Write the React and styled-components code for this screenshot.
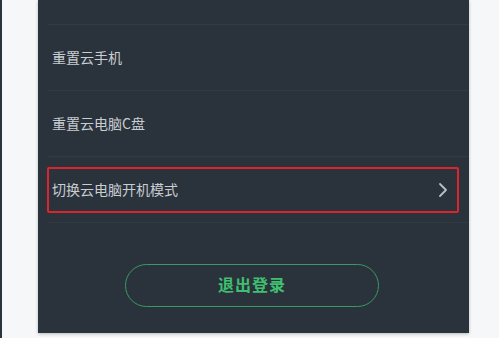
import styled, { createGlobalStyle } from "styled-components";

const GlobalStyle = createGlobalStyle`
  html, body {
    margin: 0;
    padding: 0;
    background: #f6f7f9;
    font-family: "Noto Sans CJK SC", "Noto Sans", sans-serif;
  }
`;

const Page = styled.div`
  width: 499px;
  height: 338px;
  display: flex;
  overflow: hidden;
  background: #f6f7f9;
  border-left: 2px solid #2b333d;
  box-sizing: border-box;
  padding-left: 36px;
`;

const Panel = styled.div`
  width: 431px;
  height: 333px;
  background: #2a323c;
  box-shadow: 0 1px 3px rgba(0, 0, 0, 0.25);
  display: flex;
  flex-direction: column;
  padding-top: 24px;
  box-sizing: border-box;
`;

const Row = styled.div`
  height: 66px;
  margin-left: 9px;
  padding-right: 10px;
  border-top: 1px solid #323a44;
  display: flex;
  align-items: center;
  box-sizing: border-box;
`;

const Item = styled.div`
  flex: 1;
  height: 46px;
  display: flex;
  align-items: center;
  justify-content: space-between;
  padding: 0 9px 0 3px;
  border: 2px solid ${(p) => (p.$active ? "#d9252b" : "transparent")};
  border-radius: 2px;
  box-sizing: border-box;
  color: #c9cdd1;
  font-size: 14px;
  margin-top: 1px;
`;

const Label = styled.span`
  line-height: 1;
  padding-bottom: 3px;
`;

const Footer = styled.div`
  border-top: 1px solid #323a44;
  margin-left: 9px;
  display: flex;
  justify-content: center;
  padding-top: 41px;
  padding-right: 9px;
`;

const LogoutButton = styled.button`
  width: 254px;
  height: 43px;
  border-radius: 22px;
  border: 1.5px solid #3a9a63;
  background: transparent;
  color: #3fbf70;
  font-family: "Noto Sans CJK SC", sans-serif;
  font-size: 16px;
  font-weight: 700;
  letter-spacing: 1px;
  line-height: 1;
  padding: 0 0 3px;
  margin-left: -3px;
`;

const Chevron = () => (
  <svg width="10" height="16" viewBox="0 0 10 16">
    <path d="M2 2 L8 8 L2 14" fill="none" stroke="#b9bec4" strokeWidth="1.8" strokeLinecap="round" strokeLinejoin="round" />
  </svg>
);

const items = [
  { label: "重置云手机" },
  { label: "重置云电脑C盘" },
  { label: "切换云电脑开机模式", active: true },
];

export default function App() {
  return (
    <>
      <GlobalStyle />
      <Page>
        <Panel>
          {items.map((it) => (
            <Row key={it.label}>
              <Item $active={it.active}>
                <Label>{it.label}</Label>
                {it.active && <Chevron />}
              </Item>
            </Row>
          ))}
          <Footer>
            <LogoutButton>退出登录</LogoutButton>
          </Footer>
        </Panel>
      </Page>
    </>
  );
}
